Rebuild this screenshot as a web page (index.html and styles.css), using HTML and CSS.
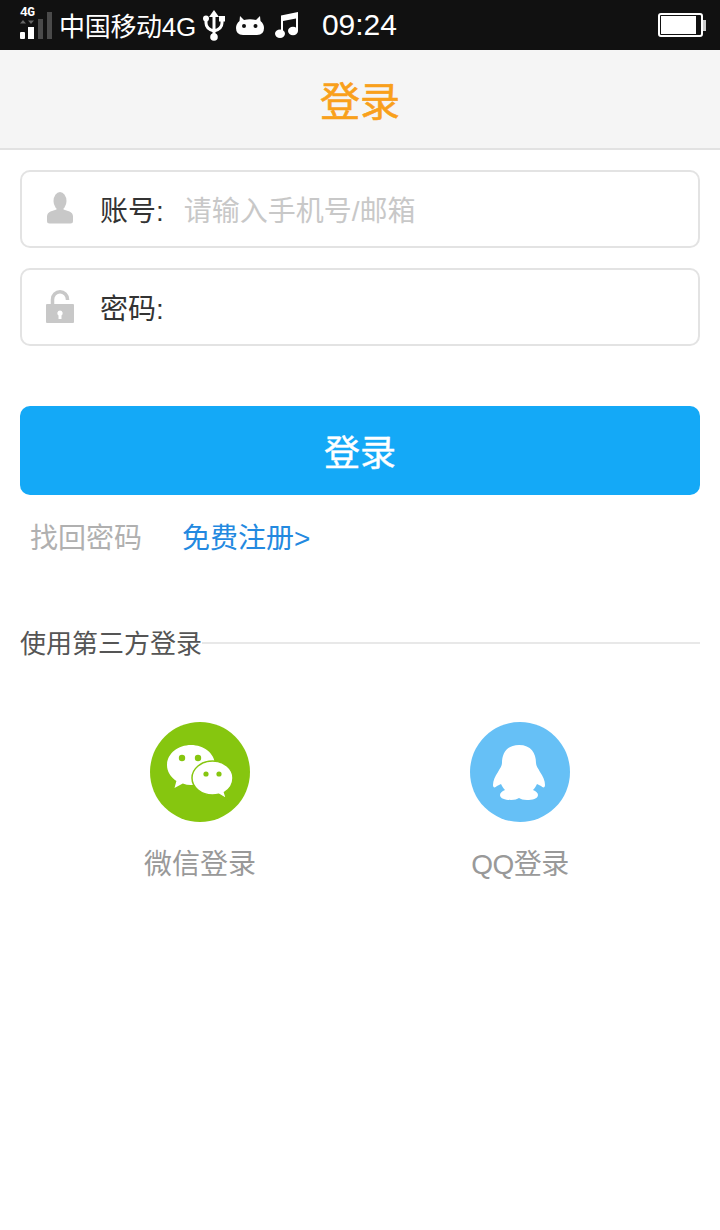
FILE: index.html
```html
<!DOCTYPE html>
<html lang="zh-CN">
<head>
    <meta charset="UTF-8">
    <meta name="viewport" content="width=device-width, initial-scale=1.0">
    <title>登录</title>
    <link rel="stylesheet" href="styles.css">
</head>
<body>
    <div class="status-bar">
        <div class="signal">
            <span class="signal-label">4G</span>
            <svg width="36" height="28" viewBox="0 0 36 28">
                <rect x="2" y="20" width="5" height="7" rx="1" fill="#fff"/>
                <rect x="10" y="15" width="6" height="12" fill="#fff"/>
                <rect x="20" y="7" width="5" height="20" fill="#4a4a4a"/>
                <rect x="29" y="0" width="5" height="27" fill="#4a4a4a"/>
                <path d="M2 11.500h6l-3-3.500zM10 8.500h6l-3 3.500z" fill="#666"/>
            </svg>
        </div>
        <span class="carrier">中国移动4G</span>
        <svg class="usb-icon" width="22" height="31" viewBox="0 0 22 31">
            <path d="M11 0l5 7H6z" fill="#fff"/>
            <path d="M11 5v22M3 9v4q0 6 8 8M19 9v4q0 6-8 8" fill="none" stroke="#fff" stroke-width="3"/>
            <circle cx="3" cy="8.500" r="3" fill="#fff"/>
            <rect x="16" y="6" width="6" height="5.500" fill="#fff"/>
            <circle cx="11" cy="27" r="3.800" fill="#fff"/>
        </svg>
        <svg class="droid-icon" width="28" height="19" viewBox="0 0 28 19">
            <path d="M4 0l4 4q6-1.500 12 0l4-4 .5 5q3.500 3 3.500 7 0 7-7 7H7q-7 0-7-7 0-4 3.500-7z" fill="#fff"/>
            <circle cx="8" cy="10" r="2" fill="#111"/>
            <circle cx="19.500" cy="10" r="2" fill="#111"/>
        </svg>
        <svg class="music-icon" width="23" height="26" viewBox="0 0 23 26">
            <path d="M6 3.500L23 0v19h-2V6.500L8 9v13H6z" fill="#fff"/>
            <ellipse cx="5" cy="21.800" rx="5" ry="4.200" fill="#fff"/>
            <ellipse cx="18" cy="19" rx="5" ry="4.200" fill="#fff"/>
        </svg>
        <span class="clock">09:24</span>
        <div class="battery">
            <div class="battery-body"><div class="battery-level"></div></div>
            <div class="battery-tip"></div>
        </div>
    </div>

    <header class="title-bar">登录</header>

    <main class="content">
        <div class="field">
            <svg class="field-icon" width="28" height="34" viewBox="0 0 28 34">
                <ellipse cx="14" cy="9" rx="6.500" ry="9" fill="#c8c8c8"/>
                <path d="M10.500 14h7v3.500l6 2q3.500 1.500 3.500 5V29q0 2.500-2.500 2.500h-21Q1 31.500 1 29v-4.500q0-3.500 3.500-5l6-2z" fill="#c8c8c8"/>
            </svg>
            <span class="field-label">账号:</span>
            <span class="placeholder">请输入手机号/邮箱</span>
        </div>
        <div class="field">
            <svg class="field-icon" width="28" height="34" viewBox="0 0 28 34">
                <path d="M6.500 15V9.500a7.500 7.700 0 0 1 15 0v.5" fill="none" stroke="#c8c8c8" stroke-width="3.500"/>
                <path fill-rule="evenodd" d="M1 14h26q1 0 1 1v17q0 1-1 1H1q-1 0-1-1V15q0-1 1-1zM14 20.500a2.800 2.800 0 0 0-1.500 5.100V29h3v-3.400A2.800 2.800 0 0 0 14 20.500z" fill="#c8c8c8"/>
            </svg>
            <span class="field-label">密码:</span>
        </div>

        <button class="login-btn">登录</button>

        <div class="links">
            <a class="link-gray">找回密码</a>
            <a class="link-blue">免费注册&gt;</a>
        </div>

        <div class="divider">
            <span>使用第三方登录</span>
            <div class="divider-line"></div>
        </div>

        <div class="socials">
            <div class="social">
                <div class="social-circle wechat">
                    <svg width="100" height="100" viewBox="0 0 100 100">
                        <path d="M41 23C27.700 23 17 31.900 17 43c0 6.500 3.700 12.300 9.400 16L24.500 66l8.300-4.600Q36.700 63 41 63c13.300 0 24-8.900 24-20S54.300 23 41 23z" fill="#fff"/>
                        <path d="M62.500 39C51.200 39 42 46.600 42 56s9.200 17 20.500 17q3.300 0 6.300-.8l7.700 4.600-2-6.400C79.600 67.300 83 62 83 56c0-9.400-9.200-17-20.500-17z" fill="#fff" stroke="#86c60f" stroke-width="1.500"/>
                        <circle cx="32" cy="36" r="3.200" fill="#86c60f"/>
                        <circle cx="48" cy="36" r="3.200" fill="#86c60f"/>
                        <circle cx="56" cy="52" r="2.600" fill="#86c60f"/>
                        <circle cx="69" cy="52" r="2.600" fill="#86c60f"/>
                    </svg>
                </div>
                <span class="social-label">微信登录</span>
            </div>
            <div class="social">
                <div class="social-circle qq">
                    <svg width="100" height="100" viewBox="0 0 100 100">
                        <path d="M49 23C37 23 32 31 32 41c0 3-2 5-4 9-3 4-5 9-5 13 0 3 2 3 4 1l4-2c1 2 2 4 4 6-3 1-5 3-5 5 0 4 6 5 11 5 4 0 6-1 8-2 2 1 4 2 8 2 5 0 11-1 11-5 0-2-2-4-5-5 2-2 3-4 4-6l4 2c2 2 4 2 4-1 0-4-2-9-5-13-2-4-4-6-4-9 0-10-5-18-17-18z" fill="#fff"/>
                    </svg>
                </div>
                <span class="social-label qq-label">QQ登录</span>
            </div>
        </div>
    </main>
</body>
</html>
```

FILE: styles.css
```css
* {
    box-sizing: border-box;
}
body {
    margin: 0;
    height: 1230px;
    background: white;
    font-family: "Liberation Sans", "Noto Sans CJK SC", sans-serif;
    overflow: hidden;
}
.status-bar {
    display: flex;
    align-items: center;
    height: 50px;
    padding-left: 18px;
    padding-right: 14px;
    background: #111111;
    color: white;
}
.signal {
    width: 36px;
    height: 40px;
    margin-right: 5px;
    position: relative;
}
.signal svg {
    position: absolute;
    left: 0;
    top: 7px;
}
.signal-label {
    display: block;
    padding-top: 1px;
    margin-left: 2px;
    font-family: "Liberation Mono", monospace;
    font-size: 13px;
    font-weight: bold;
    line-height: 13px;
    letter-spacing: -0.5px;
}
.carrier {
    margin-bottom: 2px;
    font-size: 26px;
    letter-spacing: -0.3px;
}
.usb-icon {
    margin-left: 7px;
}
.droid-icon {
    margin-left: 11px;
}
.music-icon {
    margin-left: 11px;
}
.clock {
    font-size: 30px;
    margin-left: 24px;
}
.battery {
    display: flex;
    align-items: center;
    margin-left: auto;
}
.battery-body {
    width: 45px;
    height: 24px;
    padding: 1px;
    border: 2px solid white;
    border-radius: 3px;
}
.battery-level {
    width: 35px;
    height: 100%;
    background: white;
}
.battery-tip {
    width: 3px;
    height: 11px;
    background: #ccc;
}
.title-bar {
    height: 100px;
    line-height: 104px;
    text-align: center;
    font-size: 40px;
    color: #f9a01b;
    background: #f5f5f5;
    border-bottom: 2px solid #e2e2e2;
    -webkit-text-stroke: 0.6px #f9a01b;
}
.content {
    padding: 20px 20px 0;
}
.field {
    display: flex;
    align-items: center;
    height: 78px;
    margin-bottom: 20px;
    padding-left: 24px;
    border: 2px solid #e3e3e3;
    border-radius: 10px;
}
.field-icon {
    flex-shrink: 0;
}
.field-label {
    margin-left: 26px;
    font-size: 28px;
    color: #333;
}
.placeholder {
    margin-left: 20px;
    font-size: 28px;
    color: #c8c8c8;
}
.login-btn {
    display: block;
    width: 100%;
    height: 89px;
    margin-top: 60px;
    padding-bottom: 3px;
    border: none;
    border-radius: 10px;
    background: #14a9f7;
    color: white;
    font-family: inherit;
    font-size: 36px;
    -webkit-text-stroke: 0.4px white;
}
.links {
    display: flex;
    gap: 40px;
    margin-top: 25px;
    padding-left: 10px;
    font-size: 28px;
    line-height: 38px;
}
.link-gray {
    color: #b0b0b0;
}
.link-blue {
    color: #2389e0;
}
.divider {
    display: flex;
    align-items: center;
    margin-top: 68px;
    font-size: 26px;
    line-height: 36px;
    color: #555;
}
.divider-line {
    flex: 1;
    height: 2px;
    margin-bottom: 2px;
    background: #e8e8e8;
}
.socials {
    display: flex;
    margin-top: 60px;
    padding-left: 20px;
}
.social {
    display: flex;
    flex-direction: column;
    align-items: center;
    width: 320px;
}
.social-circle {
    width: 100px;
    height: 100px;
    border-radius: 50%;
}
.social-circle svg {
    display: block;
}
.wechat {
    background: #86c60f;
}
.qq {
    background: #66c0f6;
}
.social-label {
    margin-top: 24px;
    font-size: 28px;
    line-height: 38px;
    color: #999;
}
.qq-label {
    letter-spacing: -0.5px;
}
```
